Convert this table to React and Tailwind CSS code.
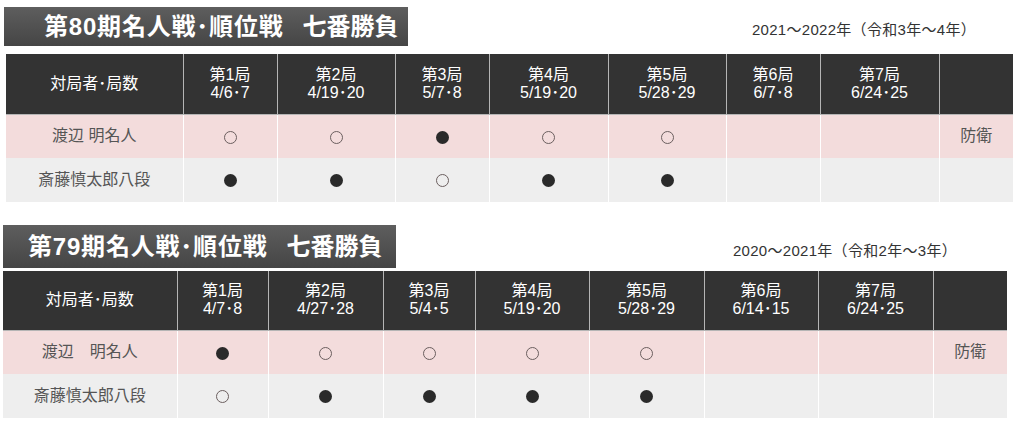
import React from 'react';

const FONT = { fontFamily: '"Liberation Sans", "Noto Sans CJK JP", sans-serif' };

const seasons = [
  {
    title: ['第80期名人戦･順位戦', '七番勝負'],
    years: '2021～2022年（令和3年～4年）',
    widths: [177, 94, 118, 94, 119, 118, 94, 119, 74],
    dates: ['4/6･7', '4/19･20', '5/7･8', '5/19･20', '5/28･29', '6/7･8', '6/24･25'],
    rows: [
      { name: '渡辺 明名人', res: ['o', 'o', 'x', 'o', 'o', '', ''], note: '防衛' },
      { name: '斎藤慎太郎八段', res: ['x', 'x', 'o', 'x', 'x', '', ''], note: '' },
    ],
  },
  {
    title: ['第79期名人戦･順位戦', '七番勝負'],
    years: '2020～2021年（令和2年～3年）',
    widths: [174, 91, 115, 92, 114, 115, 114, 115, 74],
    dates: ['4/7･8', '4/27･28', '5/4･5', '5/19･20', '5/28･29', '6/14･15', '6/24･25'],
    rows: [
      { name: '渡辺　明名人', res: ['x', 'o', 'o', 'o', 'o', '', ''], note: '防衛' },
      { name: '斎藤慎太郎八段', res: ['o', 'x', 'x', 'x', 'x', '', ''], note: '' },
    ],
  },
];

// o = 勝ち(白丸), x = 負け(黒丸)
const Mark = ({ v }) => {
  if (v === 'o') return <span className="inline-block w-[13px] h-[13px] rounded-full border border-[#6b5f5f] align-middle" />;
  if (v === 'x') return <span className="inline-block w-[13px] h-[13px] rounded-full bg-[#2a2a2a] align-middle" />;
  return null;
};

const Season = ({ s, first }) => (
  <section>
    {/* タイトル帯 + 年度 */}
    <div className={first ? 'flex items-end justify-between pl-1 pr-[48px]' : 'flex items-end justify-between pl-[3px] pr-[67px]'}>
      <h2
        className={
          first
            ? 'w-[404px] h-[39px] pl-[40px] flex items-center bg-gradient-to-b from-[#5e5e5e] to-[#454545] text-white text-[24px] font-bold'
            : 'w-[393px] h-[43px] pl-[25px] flex items-center bg-gradient-to-b from-[#5e5e5e] to-[#454545] text-white text-[24px] font-bold'
        }
        style={{ fontFamily: '"Liberation Sans", "Noto Sans CJK JP", sans-serif' }}
      >
        <span className="tracking-[0.8px]">{s.title[0]}</span>
        <span className="ml-[19px]">{s.title[1]}</span>
      </h2>
      <p className={first ? 'text-[15px] text-[#333] mb-[5px] tracking-[0.3px]' : 'text-[15px] text-[#333] mb-[6px] tracking-[0.3px]'}>{s.years}</p>
    </div>

    <table className={first ? 'table-fixed border-collapse ml-[6px] mt-2' : 'table-fixed border-collapse ml-[3px] mt-[3px]'}>
      <colgroup>
        {s.widths.map((w, i) => (
          <col key={i} style={{ width: w }} />
        ))}
      </colgroup>
      <thead>
        <tr className={first ? 'h-[60px] bg-[#333]' : 'h-[59px] bg-[#333]'}>
          <th className="border-r border-b border-[#b5b5b5] text-white text-[16px] font-normal">対局者･局数</th>
          {s.dates.map((d, i) => (
            <th key={i} className="border-x border-b border-[#b5b5b5] text-white text-[16px] leading-[18px] font-normal">
              第{i + 1}局
              <br />
              {d}
            </th>
          ))}
          <th className="border-l border-b border-[#b5b5b5]" />
        </tr>
      </thead>
      <tbody>
        {s.rows.map((r, ri) => (
          <tr key={ri} className={ri === 0 ? 'h-[44px] bg-[#f3dcdc]' : 'h-[44px] bg-[#eeeeee]'}>
            <td className="border-r border-white text-center text-[16px] text-[#555]">{r.name}</td>
            {r.res.map((v, i) => (
              <td key={i} className="border-x border-white text-center">
                <Mark v={v} />
              </td>
            ))}
            <td className="border-l border-white text-center text-[16px] text-[#555]">{r.note}</td>
          </tr>
        ))}
      </tbody>
    </table>
  </section>
);

export default function App() {
  return (
    <div className="w-[1024px] h-[441px] bg-white pt-[7px] flex flex-col gap-[23px]" style={FONT}>
      {seasons.map((s, i) => (
        <Season key={i} s={s} first={i === 0} />
      ))}
    </div>
  );
}
